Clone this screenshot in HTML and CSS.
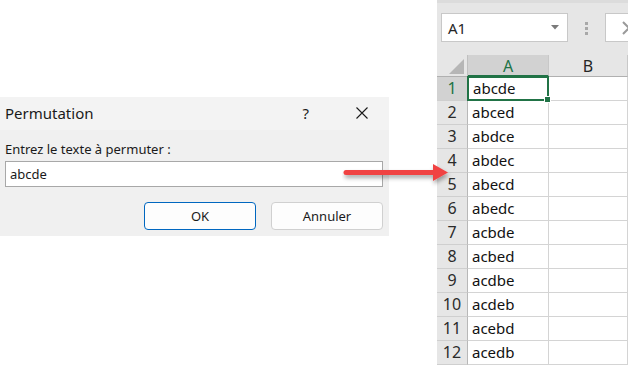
FILE: index.html
```html
<!DOCTYPE html>
<html lang="fr">
<head>
    <meta charset="UTF-8">
    <title>Permutation</title>
    <link rel="stylesheet" href="styles.css">
</head>
<body>
    <div class="stage">
        <!-- Left side: the input dialog -->
        <div class="left">
            <div class="dialog">
                <div class="title-bar">
                    <span class="title">Permutation</span>
                    <span class="help">?</span>
                    <svg class="close" width="12" height="12" viewBox="0 0 12 12">
                        <path d="M0.5 0.5 L11.5 11.5 M11.5 0.5 L0.5 11.5" stroke="#1a1a1a" stroke-width="1.1" fill="none"/>
                    </svg>
                </div>
                <div class="dialog-body">
                    <label for="texte">Entrez le texte à permuter :</label>
                    <div class="input" id="texte">abcde</div>
                    <div class="button-group">
                        <button class="btn primary">OK</button>
                        <button class="btn">Annuler</button>
                    </div>
                </div>
            </div>
        </div>

        <!-- Right side: the worksheet -->
        <div class="sheet">
            <div class="toolbar">
                <div class="name-box">
                    <span>A1</span>
                    <svg width="8" height="5" viewBox="0 0 8 5"><path d="M0 0 L8 0 L4 4.5 Z" fill="#7a7a7a"/></svg>
                </div>
                <div class="dots"><i></i><i></i><i></i></div>
                <div class="formula-box">
                    <svg class="cancel" width="14" height="14" viewBox="0 0 14 14">
                        <path d="M1 1 L13 13 M13 1 L1 13" stroke="#9a9a9a" stroke-width="2" fill="none"/>
                    </svg>
                </div>
            </div>
            <div class="grid" id="grid">
                <div class="corner"><span class="tri"></span></div>
                <div class="col-head active">A</div>
                <div class="col-head">B</div>
            </div>
        </div>

        <svg class="arrow" width="120" height="34" viewBox="0 0 120 34">
            <defs>
                <filter id="shadow" x="-20%" y="-50%" width="140%" height="200%">
                    <feDropShadow dx="1" dy="3" stdDeviation="2" flood-color="#000" flood-opacity="0.35"/>
                </filter>
            </defs>
            <g filter="url(#shadow)">
                <path d="M4 11.5 L93 11.5" stroke="#f04343" stroke-width="5" stroke-linecap="round"/>
                <path d="M91 3 L106 11.5 L91 20 Z" fill="#f04343"/>
            </g>
        </svg>
    </div>

    <script>
        const rows = ['abcde', 'abced', 'abdce', 'abdec', 'abecd', 'abedc',
                      'acbde', 'acbed', 'acdbe', 'acdeb', 'acebd', 'acedb'];
        const grid = document.getElementById('grid');
        rows.forEach(function (text, i) {
            const head = document.createElement('div');
            head.className = 'row-head' + (i === 0 ? ' active' : '');
            head.textContent = i + 1;
            const cellA = document.createElement('div');
            cellA.className = 'cell' + (i === 0 ? ' selected' : '');
            cellA.textContent = text;
            const cellB = document.createElement('div');
            cellB.className = 'cell';
            grid.append(head, cellA, cellB);
        });
    </script>
</body>
</html>
```
FILE: styles.css
```css
body {
    margin: 0;
    background: #ffffff;
    font-family: "Noto Sans", "Open Sans", sans-serif;
    color: #1a1a1a;
}
.stage {
    position: relative;
    display: flex;
    width: 628px;
    height: 365px;
    overflow: hidden;
}
.left {
    width: 437px;
    flex: none;
}

/* Dialog */
.dialog {
    margin-top: 97px;
    width: 389px;
    background: #f0f0f0;
}
.title-bar {
    display: flex;
    align-items: center;
    height: 33px;
    padding-left: 5px;
    padding-bottom: 2px;
    box-sizing: border-box;
    background: #f3f3f3;
}
.title {
    font-size: 15px;
    flex: 1;
}
.help {
    font-size: 15px;
    margin-right: 47px;
}
.close {
    margin-right: 21px;
}
.dialog-body {
    padding: 10px 6px 6px 5px;
}
label {
    display: block;
    font-size: 13px;
    line-height: 19px;
    height: 19px;
}
.input {
    margin-top: 2px;
    height: 24px;
    border: 1px solid #a8a8a8;
    background: #ffffff;
    font-size: 13px;
    line-height: 24px;
    padding-left: 4px;
}
.button-group {
    display: flex;
    justify-content: flex-end;
    gap: 15px;
    margin-top: 15px;
}
.btn {
    width: 112px;
    height: 28px;
    border: 1px solid #d0d0d0;
    border-radius: 4px;
    background: #fdfdfd;
    font-family: inherit;
    font-size: 13px;
    color: #1a1a1a;
    padding: 0;
}
.btn.primary {
    border-color: #0067c0;
}

/* Worksheet */
.sheet {
    flex: 1;
    background: #e6e6e6;
    display: flex;
    flex-direction: column;
    overflow: hidden;
}
.toolbar {
    display: flex;
    align-items: flex-start;
    height: 55px;
    box-sizing: border-box;
    border-top: 3px solid #dcdcdc;
    padding-top: 10px;
}
.name-box {
    display: flex;
    align-items: center;
    justify-content: space-between;
    margin-left: 4px;
    width: 127px;
    height: 29px;
    box-sizing: border-box;
    border: 1px solid #c8c8c8;
    background: #ffffff;
    padding: 0 8px 0 6px;
    font-size: 15px;
    color: #262626;
}
.dots {
    display: flex;
    flex-direction: column;
    gap: 2px;
    margin: 9px 0 0 17px;
}
.dots i {
    width: 3px;
    height: 3px;
    background: #a8a8a8;
}
.formula-box {
    margin-left: 17px;
    flex: 1;
    height: 29px;
    box-sizing: border-box;
    border: 1px solid #c8c8c8;
    border-right: none;
    background: #ffffff;
    position: relative;
    overflow: hidden;
}
.cancel {
    position: absolute;
    left: 16px;
    top: 7px;
}
.grid {
    display: grid;
    grid-template-columns: 31px 81px 1fr;
    grid-template-rows: 22px repeat(12, 24px);
    background: #ffffff;
}
.corner {
    background: #e6e6e6;
    border-right: 1px solid #c0c0c0;
    border-bottom: 1px solid #b0b0b0;
    position: relative;
}
.tri {
    position: absolute;
    right: 3px;
    bottom: 2px;
    width: 0;
    height: 0;
    border-left: 15px solid transparent;
    border-bottom: 15px solid #b6b6b6;
}
.col-head {
    background: #e6e6e6;
    border-right: 1px solid #c8c8c8;
    border-bottom: 1px solid #b0b0b0;
    text-align: center;
    font-size: 16px;
    line-height: 22px;
    color: #262626;
}
.col-head.active {
    background: #d2d2d2;
    color: #217346;
    border-bottom: 2px solid #217346;
}
.row-head {
    background: #e6e6e6;
    border-right: 1px solid #b8b8b8;
    border-bottom: 1px solid #cfcfcf;
    text-align: center;
    font-size: 16px;
    line-height: 23px;
    color: #2b2b2b;
}
.row-head.active {
    background: #d2d2d2;
    color: #217346;
}
.cell {
    border-right: 1px solid #d4d4d4;
    border-bottom: 1px solid #d4d4d4;
    font-size: 15px;
    line-height: 23px;
    padding-left: 4px;
    color: #111111;
}
.cell.selected {
    position: relative;
    border: 2px solid #217346;
    margin: -1px 0 0 -1px;
    line-height: 21px;
}
.cell.selected::after {
    content: "";
    position: absolute;
    right: -4px;
    bottom: -4px;
    width: 5px;
    height: 5px;
    background: #217346;
    border: 1px solid #ffffff;
}

/* Red pointer arrow laid over both halves */
.arrow {
    position: absolute;
    left: 342px;
    top: 161px;
}
```
